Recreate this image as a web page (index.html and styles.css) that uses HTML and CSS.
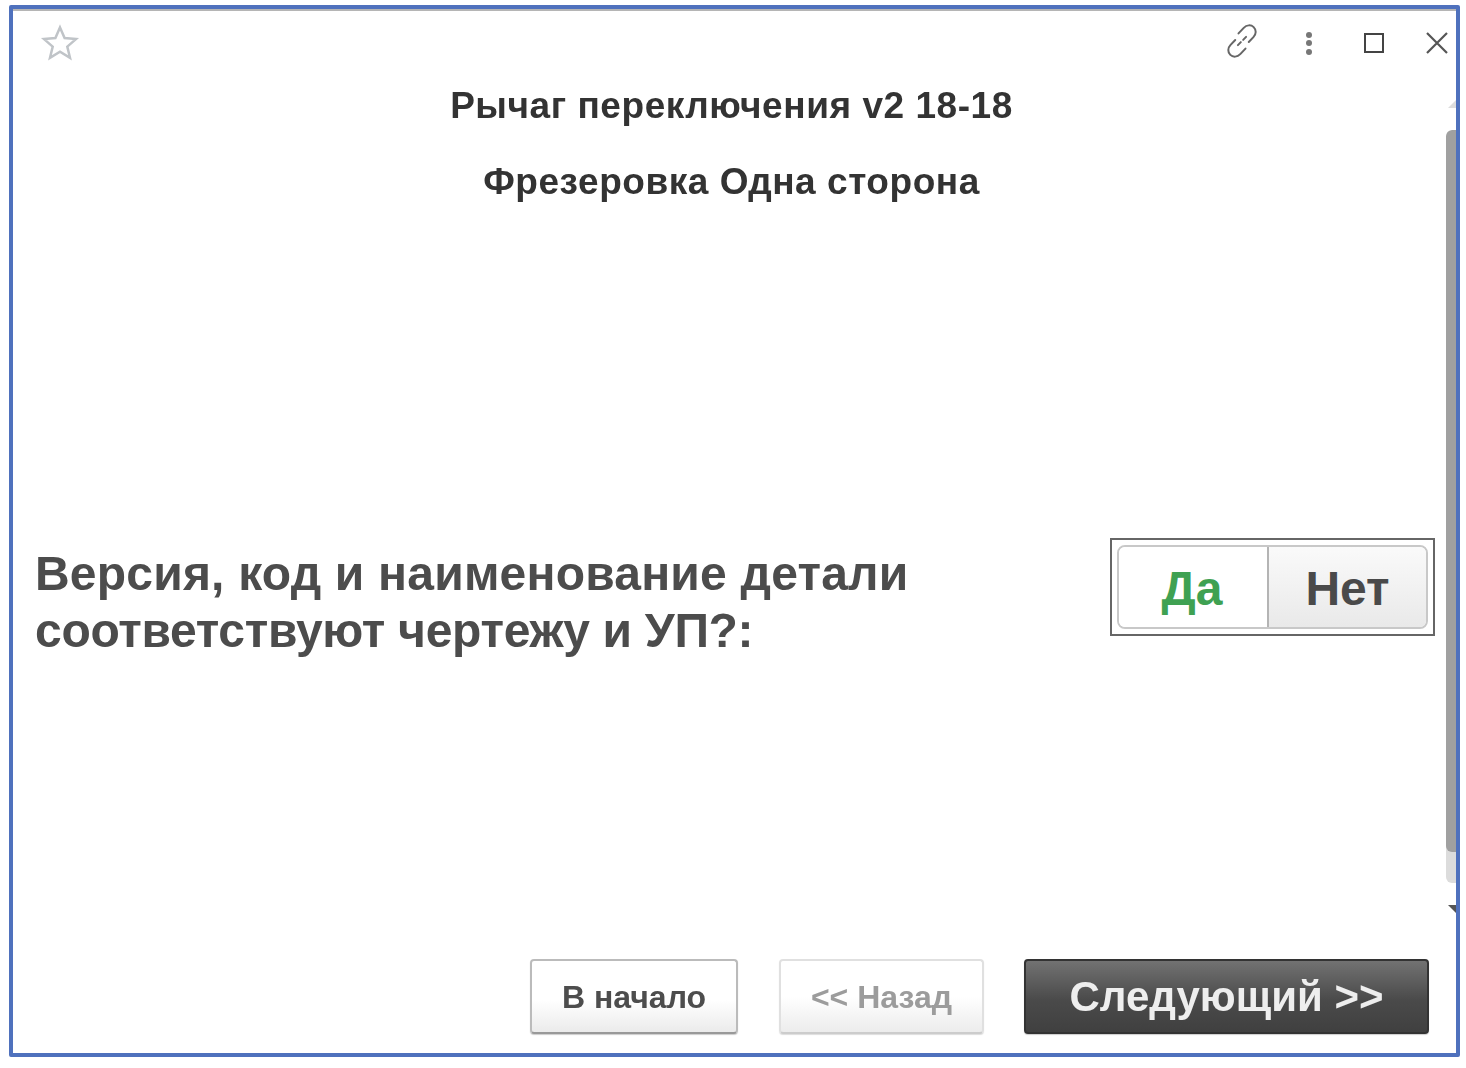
FILE: index.html
```html
<html>
	<head>
		<title>Рычаг переключения</title>
		<link rel="stylesheet" href="styles.css">
	</head>
	<body>
		<div class="window">
			<div class="topBar">
				<svg class="star" width="40" height="40" viewBox="0 0 40 40"><path d="M20 4.500l4.600 10.600 11.400 1-8.700 7.500 2.700 11.200-10-6-10 6 2.700-11.200-8.700-7.500 11.400-1z"/></svg>
				<div class="tools">
					<svg class="link" width="42" height="42" viewBox="0 0 36 36"><path d="M15 11.500l4.500-4.800c2.500-2.600 6.200-2.800 8.500-.6 2.400 2.300 2.300 6-.2 8.600l-4 4.200"/><path d="M21 24.500l-4.500 4.800c-2.500 2.600-6.200 2.800-8.500.6-2.400-2.300-2.300-6 .2-8.600l4-4.200"/><path d="M14.500 21.500l2.500-2.500M19 17l2.500-2.500"/></svg>
					<div class="dots"><i></i><i></i><i></i></div>
					<div class="maximize"></div>
					<svg class="close" width="24" height="24" viewBox="0 0 24 24"><path d="M2 2l20 20M22 2L2 22"/></svg>
				</div>
			</div>

			<div class="title first">Рычаг переключения v2 18-18</div>
			<div class="title">Фрезеровка Одна сторона</div>

			<div class="question">
				<div class="questionText">
					<div class="lineOne">Версия, код и наименование детали</div>
					<div class="lineTwo">соответствуют чертежу и УП?:</div>
				</div>
				<div class="choice">
					<div class="choiceInner">
						<div class="yes">Да</div>
						<div class="no">Нет</div>
					</div>
				</div>
			</div>

			<div class="footer">
				<div class="button start">В начало</div>
				<div class="button back">&lt;&lt; Назад</div>
				<div class="button next">Следующий &gt;&gt;</div>
			</div>

			<div class="scrollUp"></div>
			<div class="scrollTrack"><div class="scrollThumb"></div></div>
			<div class="scrollDown"></div>
		</div>
	</body>
</html>
```

FILE: styles.css
```css
body {
	margin: 0;
	background: #fff;
	font-family: "Liberation Sans", Arial, sans-serif;
	font-weight: bold;
}

.window {
	position: relative;
	box-sizing: border-box;
	display: flex;
	flex-direction: column;
	width: 1451px;
	height: 1052px;
	margin: 5px 0 0 9px;
	border: 4px solid #4f71bd;
	border-radius: 2px;
	box-shadow: inset 0 2px 0 #b5b5b5;
	filter: blur(0.7px);
}

.topBar {
	display: flex;
	justify-content: space-between;
	align-items: center;
	height: 68px;
	padding: 0 7px 0 27px;
}

.star path {
	fill: none;
	stroke: #c0c4c8;
	stroke-width: 2.5;
}

.tools {
	display: flex;
	align-items: center;
}

.link {
	margin-top: -4px;
}

.link path {
	fill: none;
	stroke: #666;
	stroke-width: 1.7;
	stroke-linecap: round;
}

.dots {
	display: flex;
	flex-direction: column;
	gap: 2.5px;
	margin-left: 43px;
}

.dots i {
	width: 6px;
	height: 6px;
	border-radius: 50%;
	background: #777;
}

.maximize {
	box-sizing: border-box;
	width: 20px;
	height: 20px;
	margin-left: 52px;
	border: 2.5px solid #444;
}

.close {
	margin-left: 41px;
}

.close path {
	fill: none;
	stroke: #555;
	stroke-width: 2.2;
}

.title {
	margin-top: 33px;
	padding-right: 6px;
	color: #333;
	font-size: 37px;
	letter-spacing: 0.55px;
	line-height: 43px;
	text-align: center;
}

.title.first {
	margin-top: 7px;
}

.question {
	display: flex;
	justify-content: space-between;
	align-items: center;
	height: 138px;
	margin-top: 330px;
	padding: 0 21px 0 22px;
}

.questionText {
	width: 900px;
	color: #4c4c4c;
	font-size: 48px;
	line-height: 57px;
	white-space: nowrap;
}

.lineOne {
	letter-spacing: 0.2px;
}

.lineTwo {
	letter-spacing: -0.3px;
}

.choice {
	box-sizing: border-box;
	width: 325px;
	height: 98px;
	margin-top: -30px;
	padding: 5px;
	border: 2px solid #666;
}

.choiceInner {
	box-sizing: border-box;
	display: flex;
	height: 100%;
	border: 2px solid #c8c8c8;
	border-radius: 8px;
	overflow: hidden;
	font-size: 48px;
	line-height: 83px;
	text-align: center;
}

.yes {
	box-sizing: border-box;
	width: 150px;
	padding-right: 2px;
	border-right: 2px solid #b4b4b4;
	background: #fff;
	color: #3fa152;
}

.no {
	flex: 1;
	background: linear-gradient(#fafafa, #e9e9e9);
	color: #4a4a4a;
}

.footer {
	display: flex;
	justify-content: flex-end;
	margin-top: auto;
	padding: 0 27px 19px 0;
}

.button {
	box-sizing: border-box;
	height: 75px;
	border-radius: 4px;
	text-align: center;
	font-size: 32px;
	line-height: 72px;
}

.start {
	width: 208px;
	margin-right: 41px;
	border: 2px solid #bbb;
	border-bottom-color: #999;
	background: linear-gradient(#fff 55%, #ebebeb);
	box-shadow: 0 1px 1px #ccc;
	color: #4d4d4d;
}

.back {
	width: 205px;
	margin-right: 40px;
	border: 2px solid #e0e0e0;
	border-bottom-color: #ccc;
	background: linear-gradient(#fff 50%, #ececec);
	box-shadow: 0 1px 1px #ddd;
	color: #9c9c9c;
}

.next {
	width: 405px;
	border: 2px solid #333;
	background: linear-gradient(#727272, #4a4a4a 55%, #404040);
	box-shadow: 0 1px 1px #ccc;
	color: #eee;
	font-size: 42px;
}

/* scrollbar lies over the page */
.scrollTrack {
	position: absolute;
	top: 121px;
	right: 0;
	width: 10px;
	height: 753px;
	border-radius: 6px 0 0 6px;
	background: #dcdcdc;
	overflow: hidden;
}

.scrollThumb {
	height: 722px;
	background: #a0a0a0;
	border-radius: 6px 0 0 6px;
}

.scrollUp,
.scrollDown {
	position: absolute;
	right: 0;
	width: 0;
	height: 0;
	border-left: 8px solid transparent;
}

.scrollUp {
	top: 91px;
	border-bottom: 8px solid #ddd;
}

.scrollDown {
	top: 896px;
	border-top: 8px solid #555;
}
```
